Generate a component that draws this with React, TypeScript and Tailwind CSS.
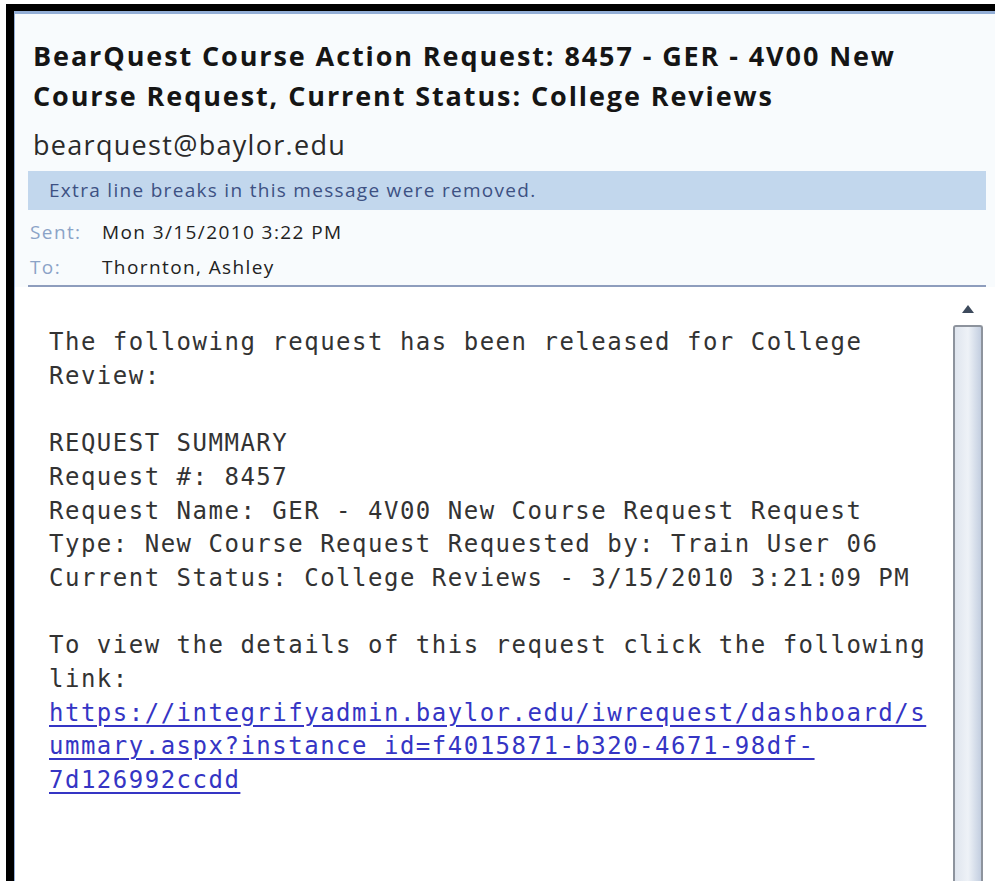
import React from 'react';

const bodyLines = [
  'The following request has been released for College',
  'Review:',
  '',
  'REQUEST SUMMARY',
  'Request #: 8457',
  'Request Name: GER - 4V00 New Course Request Request',
  'Type: New Course Request Requested by: Train User 06',
  'Current Status: College Reviews - 3/15/2010 3:21:09 PM',
  '',
  'To view the details of this request click the following',
  'link:',
];

const linkLines = [
  'https://integrifyadmin.baylor.edu/iwrequest/dashboard/s',
  'ummary.aspx?instance_id=f4015871-b320-4671-98df-',
  '7d126992ccdd',
];

const App: React.FC = () => {
  return (
    <div className="w-full h-[881px] bg-white overflow-hidden pt-[4px] pl-[6px]">
      <div className="h-full border-l-[8px] border-t-[7px] border-black">
        <div className="h-full flex flex-col border-t-[3px] border-l border-[#93aed6]">
          {/* message header */}
          <div className="bg-[#f8fbfd] pl-[13px] pr-[9px] pt-[22px] font-['Open_Sans','Noto_Sans',sans-serif]">
            <div className="pl-[5px] text-[27px] leading-[40px] font-bold text-[#151515] tracking-[1.9px]">
              <div className="whitespace-nowrap">BearQuest Course Action Request: 8457 - GER - 4V00 New</div>
              <div className="whitespace-nowrap">Course Request, Current Status: College Reviews</div>
            </div>
            <div className="pl-[5px] mt-[12px] text-[27px] leading-[34px] text-[#2a2a2a] tracking-[1.3px]">bearquest@baylor.edu</div>
            <div className="mt-[9px] h-[39px] bg-[#c2d7ed] pl-[21px] flex items-center text-[19px] text-[#3d5183] tracking-[1.3px]">
              Extra line breaks in this message were removed.
            </div>
            <div className="flex flex-col pt-[5px] text-[19px] leading-[35px] tracking-[1.4px]">
              <div className="flex">
                <span className="w-[74px] pl-[2px] text-[#8ba3c7]">Sent:</span>
                <span className="text-[#222]">Mon 3/15/2010 3:22 PM</span>
              </div>
              <div className="flex">
                <span className="w-[74px] pl-[2px] text-[#8ba3c7]">To:</span>
                <span className="text-[#222]">Thornton, Ashley</span>
              </div>
            </div>
            <div className="h-[2px] bg-[#8e9dbd]" />
          </div>

          {/* message body */}
          <div className="flex-1 flex bg-white pl-[13px] pr-[12px]">
            <div className="flex-1 pl-[21px] pt-[39px] font-['DejaVu_Sans_Mono',monospace] text-[24px] tracking-[1.5px] leading-[33.7px] text-[#333] whitespace-pre">
              {bodyLines.map((line, i) => (
                <div key={i}>{line === '' ? '\u00a0' : line}</div>
              ))}
              {linkLines.map((line, i) => (
                <div key={i}>
                  <a href="#" className="text-[#3535c4] underline decoration-[#3535c4] underline-offset-[4px]">
                    {line}
                  </a>
                </div>
              ))}
            </div>

            {/* vertical scrollbar */}
            <div className="w-[30px] flex flex-col items-center pt-[18px]">
              <svg width="12" height="9" viewBox="0 0 12 9" className="shrink-0">
                <path d="M6 0 L12 8 L0 8 Z" fill="#3d4a5c" />
              </svg>
              <div className="mt-[11px] w-full flex-1 rounded-t-[3px] border-2 border-b-0 border-[#8d939d] bg-gradient-to-r from-[#dfe5ee] via-[#eef2f7] to-[#c3cee0]" />
            </div>
          </div>
        </div>
      </div>
    </div>
  );
};

export default App;
